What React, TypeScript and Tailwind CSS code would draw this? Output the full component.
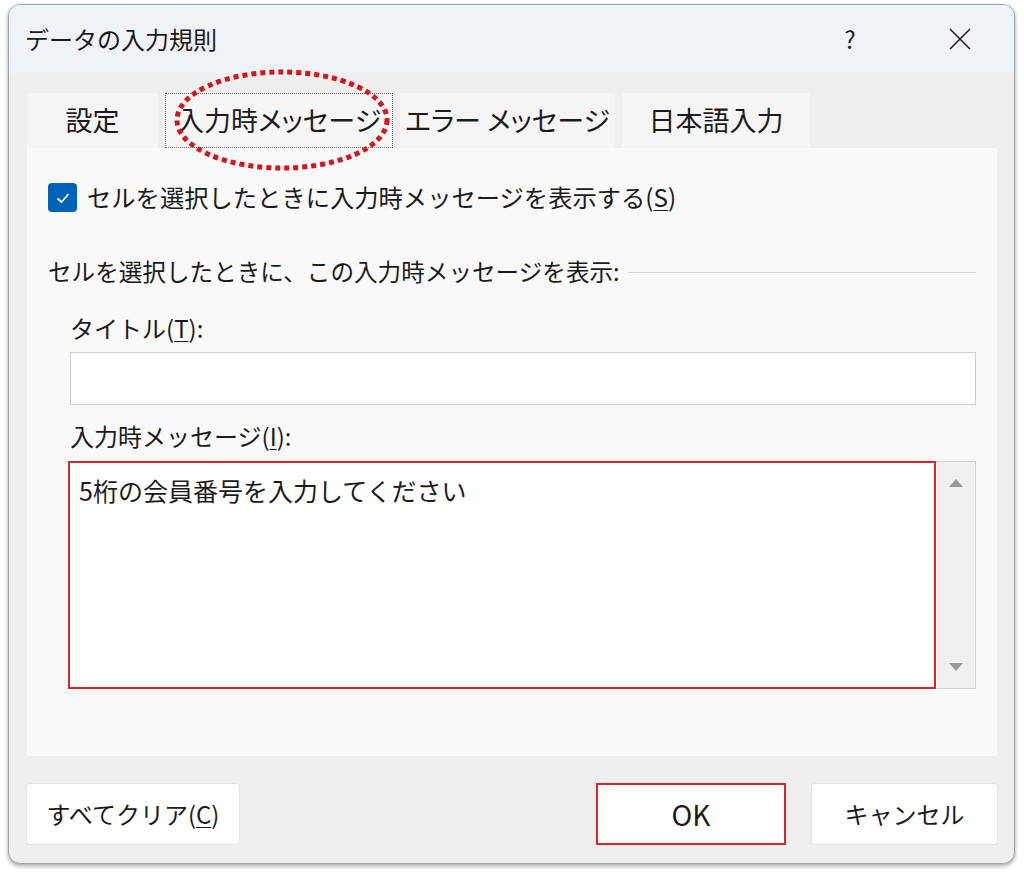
import React from "react";

const font = "font-['Noto_Sans_CJK_JP','Noto_Sans',sans-serif]";

function U({ children }: { children: React.ReactNode }) {
  return <span className="underline underline-offset-[3px] decoration-1">{children}</span>;
}

const tab = "h-[55px] flex items-center justify-center text-[27px] [font-feature-settings:'palt']";

export default function App() {
  return (
    <div className={`w-[1024px] h-[872px] bg-white pt-[4px] px-[8px] ${font} text-[#1b1b1b] relative`}>
      {/* Window */}
      <div className="w-[1007px] h-[860px] rounded-[12px] border border-[#a3a3a3] shadow-[0_2px_4px_rgba(0,0,0,0.35)] overflow-hidden flex flex-col bg-[#efefef]">
        {/* Title bar */}
        <div className="h-[68px] shrink-0 bg-[#eff3f8] flex items-center pl-[16px] pr-[24px]">
          <span className="text-[24px] leading-none">データの入力規則</span>
          <div className="ml-auto flex items-center gap-[50px]">
            <div className="w-[60px] flex justify-center text-[24px] leading-none">?</div>
            <div className="w-[60px] flex justify-center">
              <svg width="22" height="22" viewBox="0 0 22 22">
                <path d="M1 1 L21 21 M21 1 L1 21" stroke="#222" strokeWidth="1.6" fill="none" />
              </svg>
            </div>
          </div>
        </div>

        {/* Body */}
        <div className="flex-1 pl-[18px] pr-[16px] pt-[20px]">
          {/* Tabs */}
          <div className="flex items-end gap-[7px] h-[55px]">
            <div className={`w-[131px] bg-[#f5f5f5] ${tab}`}>設定</div>
            <div className={`w-[228px] bg-[#f6f6f6] border border-dotted border-[#666] ${tab}`}>入力時メッセージ</div>
            <div className={`w-[215px] bg-[#f5f5f5] ${tab}`}>エラー メッセージ</div>
            <div className={`w-[188px] bg-[#f5f5f5] ${tab}`}>日本語入力</div>
          </div>

          {/* Panel */}
          <div className="w-[970px] h-[608px] bg-[#f9f9f9] pl-[21px] pr-[21px] pt-[35px]">
            <div className="flex items-center h-[29px] gap-[10px]">
              <div className="w-[29px] h-[29px] rounded-[4px] bg-[#0063b8] flex items-center justify-center">
                <svg width="18" height="18" viewBox="0 0 18 18">
                  <path d="M3.5 9.5 L7.5 13 L14.5 5" stroke="white" strokeWidth="1.7" fill="none" />
                </svg>
              </div>
              <span className="text-[24.3px] leading-none">
                セルを選択したときに入力時メッセージを表示する(<U>S</U>)
              </span>
            </div>

            <div className="mt-[44px] h-[32px] flex items-center">
              <span className="text-[23.6px] leading-none whitespace-nowrap">セルを選択したときに、この入力時メッセージを表示:</span>
              <div className="flex-1 ml-[8px] h-px bg-[#d9d9d9]" />
            </div>

            <div className="pl-[22px]">
              <div className="mt-[24px] h-[32px] flex items-center text-[24px] leading-none">
                タイトル(<U>T</U>):
              </div>
              <div className="mt-[8px] h-[53px] bg-white border border-[#cfcfcf]" />

              <div className="mt-[15px] h-[32px] flex items-center text-[24px] leading-none">
                入力時メッセージ(<U>I</U>):
              </div>
              <div className="mt-[9px] -ml-[2px] h-[228px] flex border border-[#d0d0d0] bg-white">
                <div className="flex-1 border-2 border-[#d9262c] -m-px pl-[9px] pt-[10px] text-[25px] leading-[34px]">
                  5桁の会員番号を入力してください
                </div>
                <div className="w-[39px] bg-[#f0f0f0] flex flex-col items-center justify-between py-[16px] ml-px">
                  <svg width="16" height="10" viewBox="0 0 16 10">
                    <path d="M1 9 L8 1 L15 9 Z" fill="#999" />
                  </svg>
                  <svg width="16" height="10" viewBox="0 0 16 10">
                    <path d="M1 1 L15 1 L8 9 Z" fill="#999" />
                  </svg>
                </div>
              </div>
            </div>
          </div>

          {/* Buttons */}
          <div className="mt-[27px] flex items-center -ml-px">
            <button className="w-[214px] h-[62px] bg-white border border-[#e3e3e3] rounded-[4px] text-[24px]">
              すべてクリア(<U>C</U>)
            </button>
            <button className="ml-auto w-[190px] h-[62px] bg-white border-2 border-[#d9262c] text-[28px]">OK</button>
            <button className="ml-[25px] w-[187px] h-[62px] bg-white border border-[#e3e3e3] rounded-[4px] text-[24px]">
              キャンセル
            </button>
          </div>
        </div>
      </div>

      {/* Red dotted annotation */}
      <svg className="absolute left-[174px] top-[69px]" width="216" height="102" viewBox="0 0 216 102">
        <ellipse cx="108" cy="51" rx="105" ry="48" fill="none" stroke="#d7141c" strokeWidth="5" strokeDasharray="5 4" />
      </svg>
    </div>
  );
}
